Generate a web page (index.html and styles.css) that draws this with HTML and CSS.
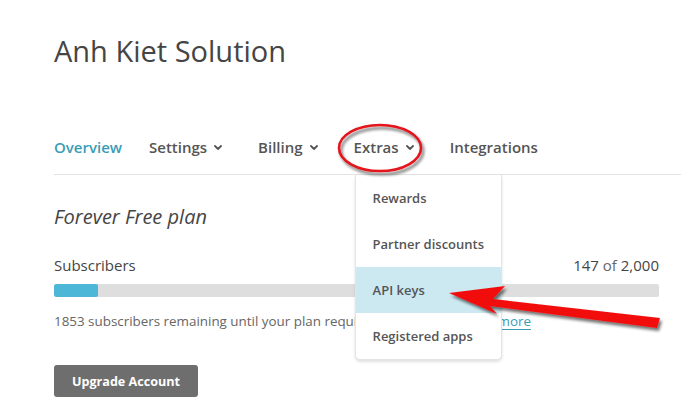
FILE: index.html
```html
<!DOCTYPE html>
<html>
<head>
<meta charset="utf-8">
<link rel="stylesheet" href="styles.css">
</head>
<body>
<div class="page">
  <h1 class="title">Anh Kiet Solution</h1>
  <nav class="nav">
    <span class="nav-item active">Overview</span>
    <span class="nav-item">Settings <svg class="chev" viewBox="0 0 8 5" width="8" height="5"><polyline points="1,1 4,4 7,1"/></svg></span>
    <span class="nav-item">Billing <svg class="chev" viewBox="0 0 8 5" width="8" height="5"><polyline points="1,1 4,4 7,1"/></svg></span>
    <span class="nav-item extras">Extras <svg class="chev" viewBox="0 0 8 5" width="8" height="5"><polyline points="1,1 4,4 7,1"/></svg>
      <ul class="dropdown">
        <li>Rewards</li>
        <li>Partner discounts</li>
        <li class="hl">API keys</li>
        <li>Registered apps</li>
      </ul>
    </span>
    <span class="nav-item">Integrations</span>
  </nav>
  <section class="plan">
    <h2 class="plan-title">Forever Free plan</h2>
    <div class="sub-row">
      <span class="sub-label">Subscribers</span>
      <span class="sub-count"><b>147</b> of <b>2,000</b></span>
    </div>
    <div class="bar"><div class="fill" style="width:44px"></div></div>
    <p class="note">1853 subscribers remaining until your plan requires an upgrade. Learn <a class="link">more</a></p>
    <button class="btn">Upgrade Account</button>
  </section>
</div>
<svg class="annot" width="681" height="420" viewBox="0 0 681 420">
  <defs>
    <filter id="sh" x="-20%" y="-40%" width="140%" height="180%">
      <feGaussianBlur in="SourceAlpha" stdDeviation="1.6"/>
      <feOffset dx="2" dy="3" result="b"/>
      <feComponentTransfer><feFuncA type="linear" slope="0.55"/></feComponentTransfer>
      <feMerge><feMergeNode/><feMergeNode in="SourceGraphic"/></feMerge>
    </filter>
  </defs>
  <ellipse cx="380" cy="148" rx="41" ry="23" fill="none" stroke="#e3131b" stroke-width="2.6" filter="url(#sh)"/>
  <polygon points="449,293 505,286 493,299 660,318 657,328 490,306 497,314" fill="#f20d0d" filter="url(#sh)"/>
</svg>
</body>
</html>
```
FILE: styles.css
```css
* { box-sizing: border-box; }
html, body { margin: 0; padding: 0; background: #fff; }
body {
  font-family: "Open Sans", "Liberation Sans", sans-serif;
  color: #454545;
  width: 681px;
  height: 420px;
  overflow: hidden;
  position: relative;
}
.page { padding: 32px 0 0 54px; }
.title {
  margin: 0;
  font-size: 29px;
  font-weight: 400;
  line-height: 38px;
  color: #454545;
}
.nav {
  margin-top: 67px;
  display: flex;
  align-items: center;
  padding-bottom: 17px;
  border-bottom: 1px solid #e2e2e2;
}
.nav-item {
  font-size: 15px;
  font-weight: 600;
  line-height: 20px;
  height: 20px;
  color: #555;
  display: flex;
  align-items: center;
  gap: 7px;
  margin-right: 27px;
}
.nav-item.active { color: #3a9cb6; }
.nav-item.extras { position: relative; }
.chev { fill: none; stroke: #555; stroke-width: 1.8; stroke-linecap: round; stroke-linejoin: round; margin-right: 9px; }
.dropdown {
  position: absolute;
  left: 1px;
  top: 38px;
  width: 147px;
  margin: 0;
  padding: 0;
  list-style: none;
  background: #fff;
  border: 1px solid #e4e4e4;
  border-top: none;
  border-radius: 0 0 5px 5px;
  box-shadow: 0 2px 3px rgba(0,0,0,0.12);
  z-index: 5;
}
.dropdown li {
  height: 46px;
  line-height: 46px;
  padding-left: 17px;
  font-size: 13px;
  font-weight: 600;
  color: #555;
  white-space: nowrap;
}
.dropdown li.hl { background: #cce9f2; }
.plan { width: 605px; }
.plan-title {
  margin: 28px 0 0;
  font-size: 20px;
  font-style: italic;
  font-weight: 400;
  line-height: 28px;
  color: #454545;
}
.sub-row {
  display: flex;
  justify-content: space-between;
  margin-top: 24px;
  font-size: 15px;
  line-height: 20px;
}
.sub-count { color: #666; }
.sub-count b { font-weight: 400; color: #454545; }
.bar {
  margin-top: 9px;
  height: 13px;
  background: #dedede;
  border-radius: 2px;
  overflow: hidden;
}
.fill { height: 100%; background: #4cb7d6; border-radius: 2px; }
.note {
  margin: 15px 0 0;
  font-size: 13.4px;
  line-height: 18px;
  color: #666;
  white-space: nowrap;
}
.link { color: #3a9cb6; text-decoration: underline; text-underline-offset: 3px; }
.btn {
  display: block;
  margin-top: 35px;
  width: 144px;
  height: 32px;
  border: none;
  border-radius: 3px;
  background: #6e6e6e;
  color: #fff;
  font-family: "Open Sans", "Liberation Sans", sans-serif;
  font-size: 12.6px;
  font-weight: 700;
  padding: 0;
}
.annot { position: absolute; left: 0; top: 0; pointer-events: none; z-index: 10; }
```
